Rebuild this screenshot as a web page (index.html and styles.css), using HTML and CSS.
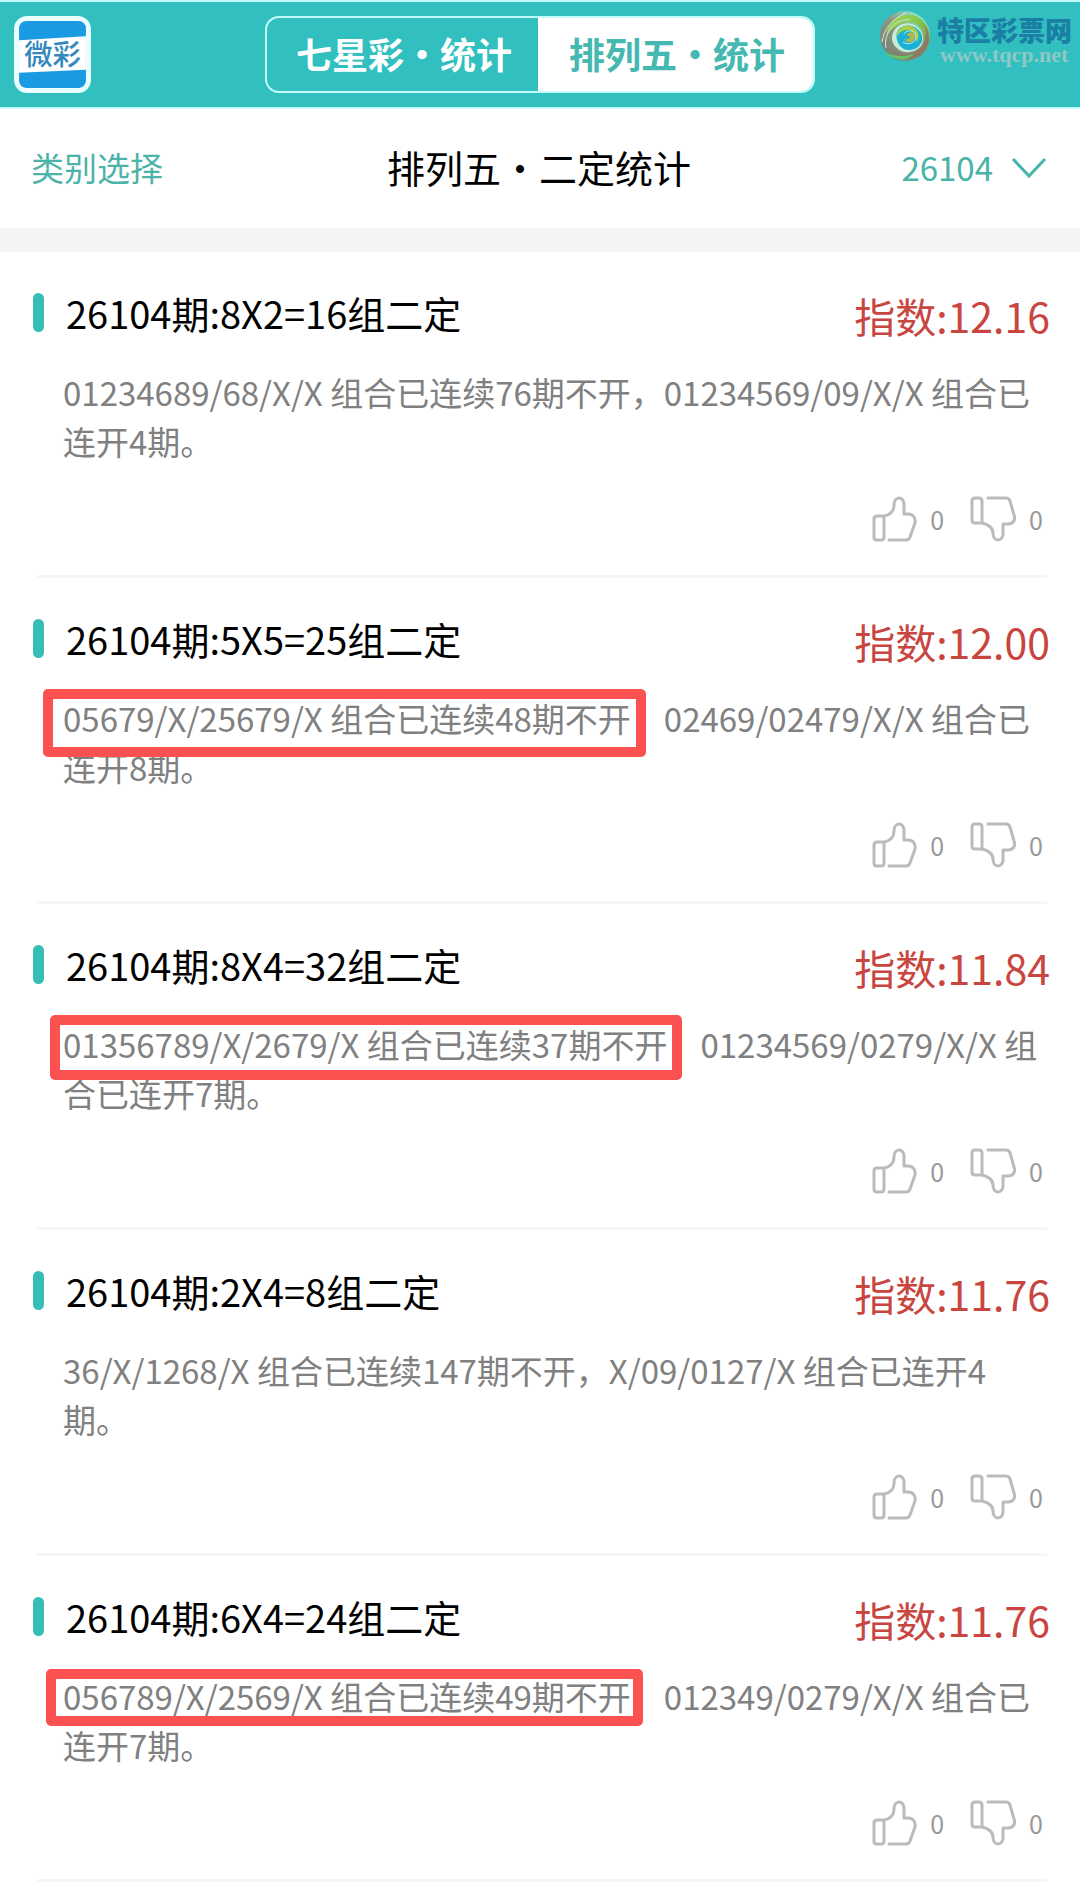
FILE: index.html
```html
<!DOCTYPE html>
<html lang="zh-CN">

<head>
    <meta charset="UTF-8">
    <meta name="viewport" content="width=device-width, initial-scale=1.0">
    <title>排列五·二定统计</title>
    <link rel="stylesheet" href="styles.css">
</head>

<body>
    <svg class="sprite" aria-hidden="true">
        <symbol id="iconUp" viewBox="0 0 46 46">
            <path d="M13 20H6q-3 0-3 3v18q0 3 3 3h4q3 0 3-3V20c6-1 10-5 10-11 0-4 2-7 5-7s5 3 5 6v10h4c5 0 8 4 7 9l-5 14q-1 3-4 3H18" />
        </symbol>
        <symbol id="iconDown" viewBox="0 0 46 46">
            <path d="M13 27H5q-3 0-3-3V5q0-3 3-3h4q3 0 3 3v22c6 1 11 5 11 10 0 4 2 7 5 7s5-3 5-6V28h5c5 0 8-4 6-9L40 5q-1-3-4-3H18" />
        </symbol>
    </svg>

    <header class="topbar">
        <a class="logo" href="#" aria-label="微彩">
            <svg viewBox="0 0 76 76">
                <rect width="76" height="76" rx="13" fill="#eafdff" />
                <rect x="5" y="5" width="66" height="66" rx="7" fill="#1b9ae4" />
                <path d="M5 24L71 20V53L5 56Z" fill="#fff" />
                <text x="38" y="48" text-anchor="middle" fill="#3389bd">微彩</text>
            </svg>
        </a>
        <nav class="tabs">
            <button class="tab" type="button">七星彩•统计</button>
            <button class="tab active" type="button">排列五•统计</button>
        </nav>
        <a class="brand" href="#">
            <svg class="swirl" viewBox="0 0 52 52" aria-hidden="true">
                <defs>
                    <linearGradient id="ringLeft" x1="0" y1="1" x2="1" y2="0">
                        <stop offset="0" stop-color="#6f7d70" />
                        <stop offset="0.5" stop-color="#8f9580" />
                        <stop offset="0.8" stop-color="#8fdcc4" />
                    </linearGradient>
                    <linearGradient id="ringRight" x1="0" y1="0" x2="1" y2="1">
                        <stop offset="0" stop-color="#a5d84e" />
                        <stop offset="0.5" stop-color="#7fc553" />
                        <stop offset="1" stop-color="#97765c" />
                    </linearGradient>
                </defs>
                <circle cx="26" cy="26" r="25" fill="url(#ringLeft)" />
                <path d="M8 26C8 12 20 3 34 5C48 9 54 24 49 36C46 43 42 46 37 48C47 36 47 20 37 14C27 9 13 16 8 26Z" fill="url(#ringRight)" />
                <path d="M13 40C22 47 36 45 43 36C48 29 48 20 45 14C54 27 50 43 36 48C26 51 17 47 13 40Z" fill="#8a7a66" />
                <path d="M6 42C15 47 26 47 35 44C32 48 26 50 20 49C14 48 9 46 6 42Z" fill="#66c562" />
                <path d="M13 30C12 18 23 11 33 14C44 18 47 29 41 37C32 46 16 43 13 30Z" fill="#c3edd9" />
                <path d="M18 30C15 19 24 14 33 16C44 20 46 30 40 36C33 43 21 41 18 30Z" fill="#17b2d6" />
                <path d="M18 27C17 18 27 13 34 17C41 21 41 28 37 33C38 25 34 20 28 20C23 20 20 23 18 27Z" fill="#a8cf45" />
                <path d="M28 26C28 21 36 21 36 27C35 33 28 34 25 29C28 30 31 29 31 26Z" fill="#b6b74a" />
                <g class="swirl-lines">
                    <path d="M3 32C5 19 13 9 27 3" />
                    <path d="M7 38C4 22 17 8 31 10" />
                    <path d="M24 32C29 36 37 33 37 26C36 20 28 19 25 24" />
                </g>
            </svg>
            <span class="brand-text">
                <span class="brand-name">特区彩票网</span>
                <span class="brand-url">www.tqcp.net</span>
            </span>
        </a>
    </header>

    <div class="subbar">
        <button class="category" type="button">类别选择</button>
        <h1>排列五•二定统计</h1>
        <button class="issue" type="button">26104
            <svg viewBox="0 0 36 22" aria-hidden="true"><path d="M2 3L18 20L34 3" /></svg>
        </button>
    </div>

    <main id="list"></main>

    <script src="script.js"></script>
</body>

</html>
```
FILE: styles.css
```css
* {
    box-sizing: border-box;
}

body {
    margin: 0;
    background-color: #fff;
    color: #000;
    font-family: "Noto Sans CJK SC", sans-serif;
}

button {
    padding: 0;
    border: none;
    background: none;
    font-family: inherit;
    cursor: pointer;
}

a {
    text-decoration: none;
}

.sprite {
    display: none;
}

/* 顶部栏 */
.topbar {
    position: relative;
    display: flex;
    align-items: center;
    justify-content: center;
    height: 109px;
    border-top: 2px solid #c4fbfa;
    border-bottom: 2px solid #c4fbfa;
    background-color: #31bfbf;
}

.logo {
    position: absolute;
    left: 14px;
    top: 14px;
}

.logo svg {
    display: block;
    width: 77px;
    height: 77px;
}

.logo text {
    font-size: 28px;
    font-weight: 500;
}

.tabs {
    display: grid;
    grid-template-columns: 271px 1fr;
    width: 550px;
    height: 77px;
    border: 2px solid #c4fbfa;
    border-radius: 14px;
    overflow: hidden;
}

.tab {
    padding: 0 0 4px 3px;
    color: #fff;
    font-size: 36px;
    font-weight: bold;
}

.tab.active {
    background-color: #fff;
    color: #45b8b1;
}

.brand {
    position: absolute;
    right: 8px;
    top: 8px;
    display: flex;
    gap: 6px;
}

.swirl {
    width: 52px;
    height: 52px;
}

.swirl-lines {
    fill: none;
    stroke: #c9ecdc;
    stroke-width: 1;
}

.brand-text {
    display: flex;
    flex-direction: column;
    padding-top: 5px;
}

.brand-name {
    color: #1b7fa5;
    font-size: 27px;
    font-weight: 900;
    line-height: 30px;
}

.brand-url {
    padding-left: 3px;
    color: #8fc9c6;
    font-family: "Liberation Serif", serif;
    font-size: 22px;
    font-weight: bold;
    line-height: 20px;
}

/* 标题栏 */
.subbar {
    display: grid;
    grid-template-columns: 1fr auto 1fr;
    align-items: center;
    height: 143px;
    padding: 0 33px 4px 31px;
    border-bottom: 24px solid #f4f4f4;
}

.subbar h1 {
    margin: 0;
    font-size: 38px;
    font-weight: normal;
}

.category,
.issue {
    color: #4bb3a7;
    font-size: 33px;
}

.category {
    justify-self: start;
}

.issue {
    display: flex;
    align-items: center;
    justify-self: end;
    gap: 18px;
}

.issue svg {
    width: 36px;
    height: 22px;
    fill: none;
    stroke: #45b5a9;
    stroke-width: 3;
}

/* 列表 */
.item {
    height: 326px;
    padding: 32px 30px 0 33px;
}

.item-head {
    display: flex;
    align-items: center;
    height: 56px;
}

.mark {
    width: 11px;
    height: 39px;
    margin-right: 22px;
    border-radius: 6px;
    background-color: #35bdb6;
}

.item-head h2 {
    flex: 1;
    margin: 0;
    font-size: 38px;
    font-weight: normal;
}

.score {
    padding-top: 6px;
    color: #c9453f;
    font-size: 41px;
}

.desc {
    margin: 28px 0 30px 30px;
    color: #808080;
    font-size: 33px;
    line-height: 49px;
}

/* 红框标记 */
.boxed {
    position: relative;
    margin-right: 33px;
}

.boxed::after {
    content: "";
    position: absolute;
    border: 10px solid #fb5151;
    border-radius: 5px;
}

.box-a::after {
    inset: -5px -15px -15px -20px;
}

.box-b::after {
    inset: -5px -15px -12px -13px;
}

.box-c::after {
    inset: -3px -12px -6px -17px;
}

.votes {
    display: flex;
    justify-content: flex-end;
    gap: 26px;
    padding-right: 7px;
}

.vote {
    display: flex;
    align-items: center;
    gap: 13px;
    color: #999;
    font-size: 25px;
    line-height: 46px;
}

.vote svg {
    width: 46px;
    height: 46px;
    fill: none;
    stroke: #bbb;
    stroke-width: 3;
    stroke-linecap: round;
    stroke-linejoin: round;
}

.line {
    height: 3px;
    margin: 33px 3px 0 4px;
    border: none;
    background-color: #f6f6f6;
}
```
FILE: script.js
```js
const items = [
    { title: '26104期:8X2=16组二定', score: '12.16', miss: '01234689/68/X/X 组合已连续76期不开', hit: '01234569/09/X/X 组合已连开4期。' },
    { title: '26104期:5X5=25组二定', score: '12.00', miss: '05679/X/25679/X 组合已连续48期不开', hit: '02469/02479/X/X 组合已连开8期。', box: 'box-a' },
    { title: '26104期:8X4=32组二定', score: '11.84', miss: '01356789/X/2679/X 组合已连续37期不开', hit: '01234569/0279/X/X 组合已连开7期。', box: 'box-b' },
    { title: '26104期:2X4=8组二定', score: '11.76', miss: '36/X/1268/X 组合已连续147期不开', hit: 'X/09/0127/X 组合已连开4期。' },
    { title: '26104期:6X4=24组二定', score: '11.76', miss: '056789/X/2569/X 组合已连续49期不开', hit: '012349/0279/X/X 组合已连开7期。', box: 'box-c' }
];

function voteButton(icon, label) {
    return `<button class="vote" type="button" aria-label="${label}"><svg aria-hidden="true"><use href="#${icon}"/></svg>0</button>`;
}

// 带红框的组合后面用间距代替逗号
document.getElementById('list').innerHTML = items.map(item => `
    <section class="item">
        <div class="item-head">
            <span class="mark"></span>
            <h2>${item.title}</h2>
            <span class="score">指数:${item.score}</span>
        </div>
        <p class="desc">${item.box ? `<span class="boxed ${item.box}">${item.miss}</span><wbr>` : `${item.miss}，`}${item.hit}</p>
        <div class="votes">${voteButton('iconUp', '赞')}${voteButton('iconDown', '踩')}</div>
        <hr class="line">
    </section>`).join('');
```
